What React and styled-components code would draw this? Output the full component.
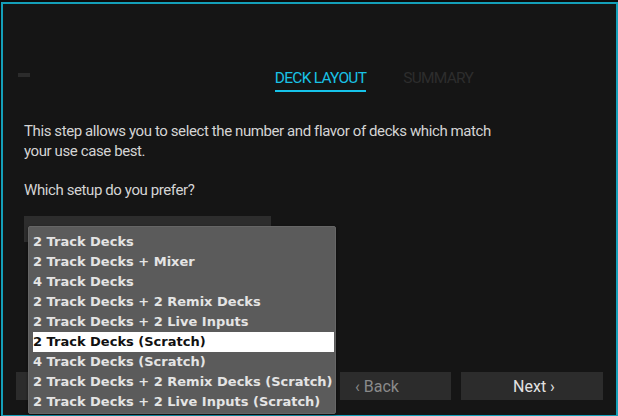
import styled, { createGlobalStyle } from "styled-components";

const GlobalStyle = createGlobalStyle`
  html, body {
    margin: 0;
    padding: 0;
    background: #0c0c0c;
    overflow: hidden;
  }
`;

const Frame = styled.div`
  box-sizing: border-box;
  margin: 2px 0 0 1px;
  width: 617px;
  height: 415px;
  border: 2px solid #149fb9;
  background: #151515;
  display: flex;
  flex-direction: column;
  padding-bottom: 15px;
  font-family: Roboto, "Liberation Sans", sans-serif;
`;

const Header = styled.div`
  display: flex;
  align-items: flex-start;
  margin-top: 65px;
  padding-right: 143px;
`;

const Dash = styled.div`
  width: 12px;
  height: 4px;
  margin: 4px 0 0 15px;
  background: #2b2b2b;
`;

const Tabs = styled.div`
  display: flex;
  gap: 37px;
  margin-left: auto;
`;

const Tab = styled.div`
  font-size: 15.5px;
  line-height: 18px;
  letter-spacing: -0.75px;
  padding-bottom: 3px;
  border-bottom: 2px solid ${(p) => (p.active ? "#16c3ea" : "transparent")};
  color: ${(p) => (p.active ? "#19c2e6" : "#2d2d2d")};
`;

const Body = styled.div`
  padding: 0 0 0 21px;
  margin-top: 29px;
  color: #d4d4d4;
  font-size: 15px;
  line-height: 20px;
`;

const Para = styled.p`
  max-width: 480px;
  margin: 0 0 ${(p) => p.gap}px;
  letter-spacing: -0.4px;
`;

const SelectWrap = styled.div`
  position: relative;
`;

const SelectBox = styled.div`
  width: 247px;
  height: 26px;
  background: #2d2d2d;
`;

const Menu = styled.ul`
  position: absolute;
  z-index: 2;
  left: 4px;
  top: 10px;
  width: 308px;
  box-sizing: border-box;
  margin: 0;
  padding: 5px 1px 1px 4px;
  list-style: none;
  background: #5b5b5b;
  border: 1px solid #666;
  border-radius: 2px;
  box-shadow: 0 1px 3px rgba(0, 0, 0, 0.5);
  font-family: "DejaVu Sans", Verdana, sans-serif;
  font-weight: bold;
  font-size: 13px;
`;

const Item = styled.li`
  height: 20px;
  line-height: 20px;
  white-space: nowrap;
  color: ${(p) => (p.selected ? "#111" : "#e4e4e4")};
  background: ${(p) => (p.selected ? "#fff" : "transparent")};
`;

const Footer = styled.div`
  display: flex;
  gap: 10px;
  margin-top: auto;
  padding-left: 13px;
`;

const Button = styled.button`
  width: ${(p) => p.w}px;
  height: 28px;
  border: none;
  background: #2c2c2c;
  color: ${(p) => (p.dim ? "#8a8a8a" : "#e2e2e2")};
  font-family: Roboto, "Liberation Sans", sans-serif;
  font-size: 16px;
  text-align: ${(p) => (p.dim ? "left" : "center")};
  padding: ${(p) => (p.dim ? "0 0 0 15px" : "0 0 0 4px")};
`;

const options = [
  "2 Track Decks",
  "2 Track Decks + Mixer",
  "4 Track Decks",
  "2 Track Decks + 2 Remix Decks",
  "2 Track Decks + 2 Live Inputs",
  "2 Track Decks (Scratch)",
  "4 Track Decks (Scratch)",
  "2 Track Decks + 2 Remix Decks (Scratch)",
  "2 Track Decks + 2 Live Inputs (Scratch)",
];

export default function App() {
  const selected = "2 Track Decks (Scratch)";
  return (
    <>
      <GlobalStyle />
      <Frame>
        <Header>
          <Dash />
          <Tabs>
            <Tab active>DECK LAYOUT</Tab>
            <Tab>SUMMARY</Tab>
          </Tabs>
        </Header>
        <Body>
          <Para gap={19}>
            This step allows you to select the number and flavor of decks which
            match your use case best.
          </Para>
          <Para gap={16}>Which setup do you prefer?</Para>
          <SelectWrap>
            <SelectBox />
            <Menu>
              {options.map((o) => (
                <Item key={o} selected={o === selected}>
                  {o}
                </Item>
              ))}
            </Menu>
          </SelectWrap>
        </Body>
        <Footer>
          <Button w={314} />
          <Button w={111} dim>
            ‹ Back
          </Button>
          <Button w={142}>Next ›</Button>
        </Footer>
      </Frame>
    </>
  );
}
